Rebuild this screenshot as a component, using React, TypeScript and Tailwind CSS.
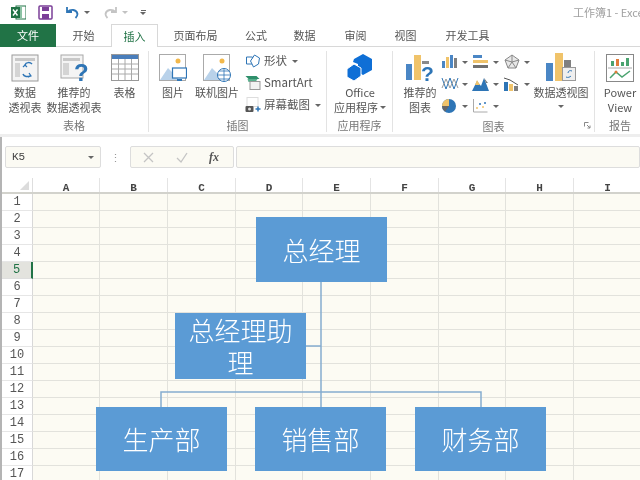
import { ReactNode } from "react";

const cols = [
  { name: "A", w: 67 },
  { name: "B", w: 68 },
  { name: "C", w: 68 },
  { name: "D", w: 67 },
  { name: "E", w: 68 },
  { name: "F", w: 68 },
  { name: "G", w: 67 },
  { name: "H", w: 68 },
  { name: "I", w: 68 },
];
const rows = Array.from({ length: 17 }, (_, i) => i + 1);

const tabs = [
  { label: "开始", w: "w-[55px]" },
  { label: "插入", w: "w-[47px]", active: true },
  { label: "页面布局", w: "w-[75px]" },
  { label: "公式", w: "w-[46px]" },
  { label: "数据", w: "w-[51px]" },
  { label: "审阅", w: "w-[51px]" },
  { label: "视图", w: "w-[49px]" },
  { label: "开发工具", w: "w-[75px]" },
];

function Caret() {
  return <span className="inline-block shrink-0 w-0 h-0 border-x-[3px] border-x-transparent border-t-[3px] border-t-[#666]" />;
}

function Group({ label, w, children }: { label: string; w: string; children: ReactNode }) {
  return (
    <div className={`${w} h-[81px] mt-[4px] shrink-0 border-r border-[#e3e3e3] flex flex-col relative`}>
      <div className="flex-1 flex">{children}</div>
      <div className="text-center text-[11px] leading-[19px] text-[#777] h-[16px]">{label}</div>
    </div>
  );
}

function BigButton({ w, icon, lines }: { w: string; icon: ReactNode; lines: ReactNode[] }) {
  return (
    <div className={`${w} shrink-0 flex flex-col items-center pt-[3px]`}>
      <div className="h-[28px] flex items-center justify-center">{icon}</div>
      <div className="mt-[3px] text-[11px] leading-[15px] text-[#555] text-center whitespace-nowrap">
        {lines.map((l, i) => (
          <div key={i}>{l}</div>
        ))}
      </div>
    </div>
  );
}

function Sheet1Icon() {
  return (
    <svg width="28" height="28" viewBox="0 0 28 28">
      <rect x="1" y="1" width="26" height="26" fill="#f4f4f4" stroke="#9a9a9a" />
      <rect x="4" y="4" width="20" height="3" fill="#c8c8c8" />
      <rect x="4" y="9" width="5" height="14" fill="#d4d4d4" />
      <path d="M12 20c1 3 5 3 7 2M21 10c-2-2-6-2-7 1" fill="none" stroke="#2e75b6" strokeWidth="1.5" />
      <path d="M18 19l2 3-3 1M12 13l2-2 2 2" fill="none" stroke="#2e75b6" strokeWidth="1.2" />
    </svg>
  );
}

function RecommendIcon() {
  return (
    <svg width="28" height="28" viewBox="0 0 28 28" overflow="visible">
      <rect x="1" y="1" width="22" height="23" fill="#f4f4f4" stroke="#a8a8a8" />
      <rect x="3" y="4" width="17" height="3" fill="#c8c8c8" />
      <rect x="3" y="9" width="6" height="12" fill="#d4d4d4" />
      <text x="14" y="27" fontSize="24" fontWeight="700" fill="#2e75b6" fontFamily="Liberation Sans, sans-serif">?</text>
    </svg>
  );
}

function TableIcon() {
  return (
    <svg width="28" height="28" viewBox="0 0 28 28">
      <rect x="0.5" y="0.5" width="27" height="26" fill="#fff" stroke="#999" />
      <rect x="1" y="1" width="26" height="4" fill="#4a7ebb" />
      <path d="M1 10h26M1 15h26M1 20h26M7.5 5v21M14 5v21M20.5 5v21" stroke="#aaa" fill="none" />
    </svg>
  );
}

function PictureIcon({ online }: { online?: boolean }) {
  return (
    <svg width="28" height="28" viewBox="0 0 28 28">
      <rect x="0.5" y="0.5" width="26" height="26" fill="#fff" stroke="#aaa" />
      <circle cx="19" cy="7" r="2.5" fill="#f2b84b" />
      <path d="M1 26l8-12 7 7 3-2v7z" fill="#b9d2ea" />
      {online ? (
        <g fill="#fff" stroke="#2e75b6">
          <circle cx="21" cy="21" r="6.5" />
          <path d="M14.500 21h13M21 14.500v13M16 17h10M16 25h10" fill="none" strokeWidth="0.8" />
        </g>
      ) : (
        <g>
          <rect x="13.500" y="14" width="14" height="10" fill="#fff" stroke="#2e75b6" strokeWidth="1.2" />
          <rect x="18" y="25" width="5" height="2" fill="#2e75b6" />
        </g>
      )}
    </svg>
  );
}

function ShapesIcon() {
  return (
    <svg width="17" height="14" viewBox="0 0 16 14">
      <path d="M1 3h6v7H1z" fill="#fff" stroke="#2e75b6" />
      <path d="M5 7l4-6 5 3-1 6-5 3z" fill="#fff" stroke="#2e75b6" />
    </svg>
  );
}

function SmartArtIcon() {
  return (
    <svg width="17" height="16" viewBox="0 0 16 16">
      <path d="M0 1h11l3 3H3z" fill="#2f8f6b" />
      <path d="M2 4h10l-2 3H3z" fill="#58b08d" />
      <rect x="4.500" y="6.500" width="10" height="8" fill="#f2f2f2" stroke="#999" />
    </svg>
  );
}

function ScreenshotIcon() {
  return (
    <svg width="17" height="16" viewBox="0 0 16 16">
      <rect x="1.500" y="0.500" width="11" height="9" fill="#fff" stroke="#ddd" />
      <rect x="0" y="9" width="8" height="6" rx="1" fill="#555" />
      <circle cx="4" cy="12" r="1.500" fill="#ddd" />
      <path d="M10 12h5M12.500 9.500v5" stroke="#2e75b6" strokeWidth="1.500" />
    </svg>
  );
}

function OfficeIcon() {
  return (
    <svg width="28" height="28" viewBox="0 0 28 28">
      <path d="M17 0l9 5v11l-9 5-5-3V10L7 8l1-3z" fill="#0f6fd6" />
      <path d="M8 10l7 4v8l-7 5-7-4v-8z" fill="#0f6fd6" stroke="#fff" strokeWidth="1" />
    </svg>
  );
}

function RecChartIcon() {
  return (
    <svg width="28" height="28" viewBox="0 0 28 28" overflow="visible">
      <rect x="0" y="10" width="6" height="16" fill="#4a86c5" />
      <rect x="8" y="1" width="7" height="25" fill="#f0c36a" />
      <rect x="16" y="7" width="7" height="3" fill="#8a8a8a" />
      <text x="15" y="27" fontSize="21" fontWeight="700" fill="#2e75b6" fontFamily="Liberation Sans, sans-serif">?</text>
    </svg>
  );
}

function PivotChartIcon() {
  return (
    <svg width="30" height="30" viewBox="0 0 30 30">
      <rect x="0" y="10" width="7" height="18" fill="#4a86c5" />
      <rect x="9" y="0" width="8" height="28" fill="#f0c36a" />
      <rect x="18" y="7" width="7" height="10" fill="#808080" />
      <rect x="16.500" y="14.500" width="13" height="13" fill="#efefef" stroke="#999" />
      <path d="M20 24c2 1 4 0 5-1M26 18c-2-1-4 0-4 2" stroke="#2e75b6" fill="none" />
    </svg>
  );
}

function ChartGlyph({ kind }: { kind: number }) {
  const glyphs: ReactNode[] = [
    <g key="c">
      <rect x="1" y="7" width="3" height="7" fill="#4a86c5" />
      <rect x="5" y="3" width="3" height="11" fill="#f0c36a" />
      <rect x="9" y="1" width="3" height="13" fill="#4a86c5" />
      <rect x="13" y="4" width="3" height="10" fill="#808080" />
    </g>,
    <g key="b">
      <rect x="1" y="1" width="9" height="3" fill="#4a86c5" />
      <rect x="1" y="6" width="15" height="3" fill="#f0c36a" />
      <rect x="1" y="11" width="15" height="3" fill="#707070" />
    </g>,
    <g key="s" stroke="#888" fill="none">
      <path d="M9 1l7 5-3 8H5L2 6z" fill="#e8e8e8" />
      <path d="M9 1v7M2 6l7 2 7-2M5 14l4-6 4 6" />
    </g>,
    <g key="l" fill="none" strokeWidth="1">
      <path d="M1 2l4 11 4-11 4 11 4-11" stroke="#2e75b6" />
      <path d="M1 12l4-9 4 9 4-9 4 9" stroke="#9a9a9a" />
    </g>,
    <g key="a">
      <path d="M0 15l5-10 4 5 3-8 5 13z" fill="#2e75b6" />
      <path d="M3 9l2-5 3 5z" fill="#f0c36a" />
      <path d="M12 2l2 5h2z" fill="#777" />
    </g>,
    <g key="w">
      <rect x="1" y="6" width="4" height="9" fill="#2e75b6" />
      <rect x="6" y="8" width="4" height="7" fill="#f0c36a" />
      <rect x="11" y="10" width="4" height="5" fill="#808080" />
      <path d="M1 2l6 2 8 5" stroke="#555" fill="none" />
    </g>,
    <g key="p">
      <circle cx="8" cy="8" r="7" fill="#2e75b6" />
      <path d="M8 8V1A7 7 0 0 0 1 8z" fill="#f0c36a" />
      <path d="M8 8H1a7 7 0 0 0 3 5.700z" fill="#666" />
    </g>,
    <g key="sc">
      <path d="M1.500 1v13h14" stroke="#aaa" fill="none" />
      <circle cx="5" cy="10" r="1" fill="#f0c36a" />
      <circle cx="8" cy="6" r="1" fill="#2e75b6" />
      <circle cx="11" cy="9" r="1" fill="#f0c36a" />
      <circle cx="13" cy="5" r="1" fill="#2e75b6" />
    </g>,
  ];
  return (
    <div className="flex items-center gap-[3px] h-[22px] w-[31px]">
      <svg width="18" height="16" viewBox="0 0 18 16">
        {glyphs[kind]}
      </svg>
      <Caret />
    </div>
  );
}

function PowerViewIcon() {
  return (
    <svg width="28" height="28" viewBox="0 0 28 28">
      <rect x="0.500" y="0.500" width="27" height="27" fill="#fff" stroke="#888" />
      <rect x="5" y="7" width="3" height="5" fill="#4aa36f" />
      <rect x="10" y="5" width="3" height="7" fill="#e07b39" />
      <rect x="15" y="8" width="3" height="4" fill="#4aa36f" />
      <rect x="20" y="4" width="3" height="8" fill="#4aa36f" />
      <path d="M2 14h24" stroke="#aaa" />
      <path d="M4 24l6-6 6 5 8-6" stroke="#4aa36f" strokeWidth="1.500" fill="none" />
      <circle cx="10" cy="18" r="1.500" fill="#e07b39" />
    </svg>
  );
}

function SmallRow({ icon, text, caret }: { icon: ReactNode; text: string; caret?: boolean }) {
  return (
    <div className="h-[22px] flex items-center gap-[2px] text-[11.5px] text-[#555] whitespace-nowrap">
      {icon}
      <span>{text}</span>
      {caret && <span className="ml-[3px] flex"><Caret /></span>}
    </div>
  );
}

function OrgBox({ className, children }: { className: string; children: ReactNode }) {
  return (
    <div className={`absolute bg-[#5b9bd5] text-white text-[26px] leading-[32px] text-center flex items-center justify-center font-light ${className}`}>
      <span>{children}</span>
    </div>
  );
}

export default function App() {
  return (
    <div
      className="w-[640px] h-[480px] overflow-hidden bg-white flex flex-col blur-[0.5px]"
      style={{ fontFamily: '"Noto Sans CJK SC", "Liberation Sans", sans-serif' }}
    >
      {/* title bar */}
      <div className="h-[24px] shrink-0 flex items-center overflow-hidden">
        <svg className="ml-[11px] shrink-0" width="15" height="15" viewBox="0 0 15 15">
          <rect x="5" y="1" width="10" height="13" fill="#fff" stroke="#217346" />
          <path d="M10 1v13" stroke="#8cc2a4" strokeWidth="2" />
          <rect x="0" y="2" width="9" height="11" fill="#217346" />
          <path d="M2 4.500l4.500 6M6.500 4.500l-4.500 6" stroke="#fff" strokeWidth="1.400" />
        </svg>
        <svg className="ml-[12px] shrink-0" width="15" height="15" viewBox="0 0 15 15">
          <rect x="1" y="1" width="13" height="13" rx="1" fill="none" stroke="#7b3f98" strokeWidth="1.500" />
          <rect x="4" y="2" width="7" height="4" fill="#7b3f98" />
          <rect x="4" y="9" width="7" height="5" fill="#7b3f98" />
        </svg>
        <svg className="ml-[12px] shrink-0" width="15" height="15" viewBox="0 0 15 15">
          <path d="M2 2v5h5M2.500 7c3-3 9-3 10 2 0 2-1 3-2 4" fill="none" stroke="#2e75b6" strokeWidth="1.800" />
        </svg>
        <span className="ml-[4px] flex shrink-0"><Caret /></span>
        <svg className="ml-[13px] shrink-0" width="15" height="15" viewBox="0 0 15 15">
          <path d="M13 2v5H8M12.500 7c-3-3-9-3-10 2 0 2 1 3 2 4" fill="none" stroke="#c4c4c4" strokeWidth="1.800" />
        </svg>
        <span className="ml-[4px] flex shrink-0 opacity-40"><Caret /></span>
        <span className="ml-[12px] flex shrink-0 flex-col items-center gap-[1px]">
          <span className="w-[5px] h-px bg-[#666]" />
          <Caret />
        </span>
        <span className="ml-[427px] shrink-0 text-[11px] text-[#a0a0a0] whitespace-nowrap">工作簿1 - Excel</span>
      </div>

      {/* tabs */}
      <div className="h-[23px] shrink-0 flex text-[11px] text-[#555] relative">
        <div className="w-[56px] bg-[#217346] text-white flex items-center justify-center">文件</div>
        {tabs.map((t) => (
          <div
            key={t.label}
            className={
              t.active
                ? `${t.w} flex items-center justify-center text-[#217346] bg-white border border-b-0 border-[#d8d8d8]`
                : `${t.w} flex items-center justify-center border-b border-[#d8d8d8]`
            }
          >
            {t.label}
          </div>
        ))}
        <div className="flex-1 border-b border-[#d8d8d8]" />
      </div>

      {/* ribbon */}
      <div className="h-[90px] shrink-0 flex border-b-[3px] border-[#eeeeee]">
        <Group label="表格" w="w-[149px]">
          <BigButton w="w-[50px]" icon={<Sheet1Icon />} lines={["数据", "透视表"]} />
          <BigButton w="w-[48px]" icon={<RecommendIcon />} lines={["推荐的", "数据透视表"]} />
          <div className="ml-[2px]">
            <BigButton w="w-[49px]" icon={<TableIcon />} lines={["表格"]} />
          </div>
        </Group>
        <Group label="插图" w="w-[178px]">
          <BigButton w="w-[48px]" icon={<PictureIcon />} lines={["图片"]} />
          <BigButton w="w-[40px]" icon={<PictureIcon online />} lines={["联机图片"]} />
          <div className="ml-[8px] flex flex-col mt-[-1px]">
            <SmallRow icon={<ShapesIcon />} text="形状" caret />
            <SmallRow icon={<SmartArtIcon />} text="SmartArt" />
            <SmallRow icon={<ScreenshotIcon />} text="屏幕截图" caret />
          </div>
        </Group>
        <Group label="应用程序" w="w-[66px]">
          <BigButton
            w="w-[66px]"
            icon={<OfficeIcon />}
            lines={[
              "Office",
              <span key="a" className="inline-flex items-center gap-[2px]">应用程序<Caret /></span>,
            ]}
          />
        </Group>
        <Group label="图表" w="w-[202px]">
          <BigButton w="w-[54px]" icon={<RecChartIcon />} lines={["推荐的", "图表"]} />
          <div className="ml-[-6px] grid grid-cols-3 w-[93px] h-[66px] shrink-0">
            {[0, 1, 2, 3, 4, 5, 6, 7].map((k) => (
              <ChartGlyph key={k} kind={k} />
            ))}
          </div>
          <div className="ml-[-4px]">
            <BigButton
              w="w-[62px]"
              icon={<PivotChartIcon />}
              lines={["数据透视图", <span key="c" className="flex justify-center pt-[5px]"><Caret /></span>]}
            />
          </div>
          <svg className="absolute right-[3px] bottom-[3px]" width="7" height="7" viewBox="0 0 7 7">
            <path d="M0.500 0.500h4M0.500 0.500v4M3 3l3 3M6 3.500V6H3.500" stroke="#888" fill="none" />
          </svg>
        </Group>
        <div className="w-[45px] h-[81px] mt-[4px] shrink-0 flex flex-col overflow-hidden">
          <div className="flex-1 flex">
            <BigButton w="w-[50px]" icon={<PowerViewIcon />} lines={["Power", "View"]} />
          </div>
          <div className="w-[50px] text-center text-[11px] leading-[19px] text-[#777] h-[16px]">报告</div>
        </div>
      </div>

      {/* formula bar */}
      <div className="h-[41px] shrink-0 flex items-start pt-[9px] border-l-2 border-[#b4b4b4]">
        <div className="ml-[3px] w-[96px] h-[22px] shrink-0 border border-[#ddd] rounded-[2px] bg-[#fbfaf3] flex items-center justify-between px-[6px] text-[11px] text-[#444]" style={{ fontFamily: '"Liberation Mono", monospace' }}>
          <span>K5</span>
          <Caret />
        </div>
        <div className="w-[29px] h-[22px] shrink-0 flex items-center justify-center text-[#999] text-[11px] leading-none">⋮</div>
        <div className="w-[104px] h-[22px] shrink-0 border border-[#ddd] rounded-[2px] bg-[#fbfaf3] flex items-center text-[#bbb]">
          <svg className="ml-[12px]" width="11" height="11" viewBox="0 0 11 11">
            <path d="M1 1l9 9M10 1l-9 9" stroke="#c4c4c4" strokeWidth="1.300" />
          </svg>
          <svg className="ml-[22px]" width="12" height="11" viewBox="0 0 12 11">
            <path d="M1 6l4 4 6-9" stroke="#c4c4c4" strokeWidth="1.300" fill="none" />
          </svg>
          <span className="ml-[21px] text-[12px] italic font-bold text-[#555]" style={{ fontFamily: '"Liberation Serif", serif' }}>
            fx
          </span>
        </div>
        <div className="ml-[2px] flex-1 h-[22px] border border-[#ddd] rounded-[2px] bg-[#fbfaf3]" />
      </div>

      {/* sheet */}
      <div className="flex-1 relative bg-[#fcfbf3] border-l-2 border-[#b4b4b4] overflow-hidden">
        <div className="flex h-[16px] border-b-2 border-[#d2d2cc] bg-white">
          <div className="w-[31px] shrink-0 border-r border-[#dedede] relative">
            <div className="absolute right-[3px] bottom-[2px] w-0 h-0 border-l-[9px] border-l-transparent border-b-[9px] border-b-[#dcdcdc]" />
          </div>
          {cols.map((c) => (
            <div
              key={c.name}
              style={{ width: c.w }}
              className="shrink-0 border-r border-[#e4e4e4] text-center text-[11px] leading-[16px] text-[#444] font-bold bg-white"
            >
              <span style={{ fontFamily: '"Liberation Mono", monospace' }}>{c.name}</span>
            </div>
          ))}
        </div>
        {rows.map((r) => (
          <div key={r} className="flex h-[17px]">
            <div
              className={
                r === 5
                  ? "w-[31px] shrink-0 text-center text-[12px] leading-[17px] text-[#217346] bg-[#e3e3de] border-r-2 border-[#217346] border-b border-b-[#dedede]"
                  : "w-[31px] shrink-0 text-center text-[12px] leading-[17px] text-[#555] bg-white border-r border-[#d8d8d8] border-b border-b-[#e6e6e6]"
              }
              style={{ fontFamily: '"Liberation Mono", monospace' }}
            >
              {r}
            </div>
            {cols.map((c) => (
              <div key={c.name} style={{ width: c.w }} className="shrink-0 border-r border-b border-[#e2e2dc]" />
            ))}
          </div>
        ))}

        {/* org chart overlay */}
        <svg className="absolute left-0 top-0" width="640" height="302" viewBox="0 0 640 302">
          <path d="M319 104V229M319 168H304M159 229V214H479V229" fill="none" stroke="#85add0" strokeWidth="1.500" />
        </svg>
        <OrgBox className="left-[254px] top-[39px] w-[131px] h-[65px]">总经理</OrgBox>
        <OrgBox className="left-[173px] top-[135px] w-[131px] h-[66px] px-[10px]">总经理助理</OrgBox>
        <OrgBox className="left-[94px] top-[229px] w-[131px] h-[64px]">生产部</OrgBox>
        <OrgBox className="left-[253px] top-[229px] w-[131px] h-[64px]">销售部</OrgBox>
        <OrgBox className="left-[413px] top-[229px] w-[131px] h-[64px]">财务部</OrgBox>
      </div>
    </div>
  );
}
